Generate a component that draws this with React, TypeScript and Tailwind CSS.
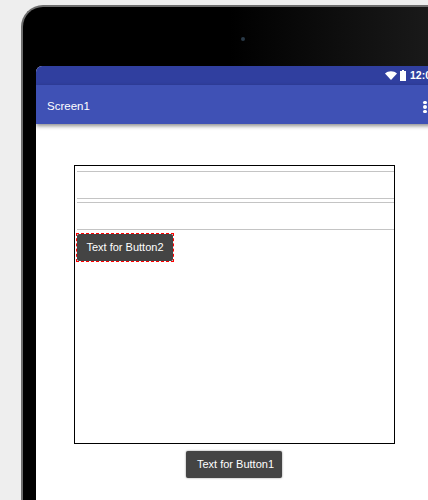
const font = { fontFamily: '"Liberation Sans", Arial, sans-serif' };

export default function App() {
  return (
    <div className="h-[500px] w-[428px] overflow-hidden bg-[#eeeeee] pl-[21px] pt-[5px]" style={font}>
      <div className="relative h-[520px] w-[460px] rounded-tl-[22px] border-l-2 border-t-2 border-[#6e6e6e] bg-[linear-gradient(90deg,#000000_45%,#202020_100%)] pl-[13px] pt-[59px]">
        <span className="absolute left-[218px] top-[30px] h-[4px] w-[4px] rounded-full bg-[#2a3a48]" />
        <div className="h-[460px] w-[440px] overflow-hidden rounded-tl-[6px] bg-white">
          <div className="flex h-[19px] items-center bg-[#303f9f] pl-[349px] text-white">
            <svg width="12" height="9" viewBox="0 0 12 9" className="mr-[3px]">
              <path d="M0 2.5C3.4-.6 8.6-.6 12 2.5L6 9Z" fill="white" />
            </svg>
            <svg width="6" height="11" viewBox="0 0 6 11" className="mr-[4px]">
              <path d="M2 0h2v1h2v10H0V1h2Z" fill="white" />
            </svg>
            <span className="whitespace-nowrap text-[10.5px] font-bold leading-none">12:00</span>
          </div>
          <div className="flex h-[39px] items-center bg-[#3f51b5] pl-[11px] pt-[5px] text-[11.5px] text-white shadow-[0_2px_4px_rgba(0,0,0,0.45)]">
            <span className="w-[376px]">Screen1</span>
            <div className="flex flex-col gap-[1px]">
              <span className="h-[3.5px] w-[3.5px] rounded-full bg-white" />
              <span className="h-[3.5px] w-[3.5px] rounded-full bg-white" />
              <span className="h-[3.5px] w-[3.5px] rounded-full bg-white" />
            </div>
          </div>
          <div className="pl-[38px] pt-[41px]">
            <div className="h-[279px] w-[321px] border border-black pt-[5px]">
              <div className="ml-[2px] h-[28px] border-y border-[#c4c4c4]" />
              <div className="ml-[2px] mt-[3px] h-[28px] border-y border-[#c4c4c4]" />
              <div className="ml-[1px] mt-[3px] w-[98px] border border-dashed border-[#ff0000]">
                <div className="flex h-[27px] items-center justify-center rounded-[2px] bg-[#444444] text-[11px] text-white">
                  Text for Button2
                </div>
              </div>
            </div>
            <div className="ml-[112px] mt-[7px] flex h-[27px] w-[96px] items-center justify-center rounded-[2px] bg-[#444444] pl-[3px] text-[11px] text-white shadow-[0_0_2px_rgba(0,0,0,0.5)]">
              Text for Button1
            </div>
          </div>
        </div>
      </div>
    </div>
  );
}
